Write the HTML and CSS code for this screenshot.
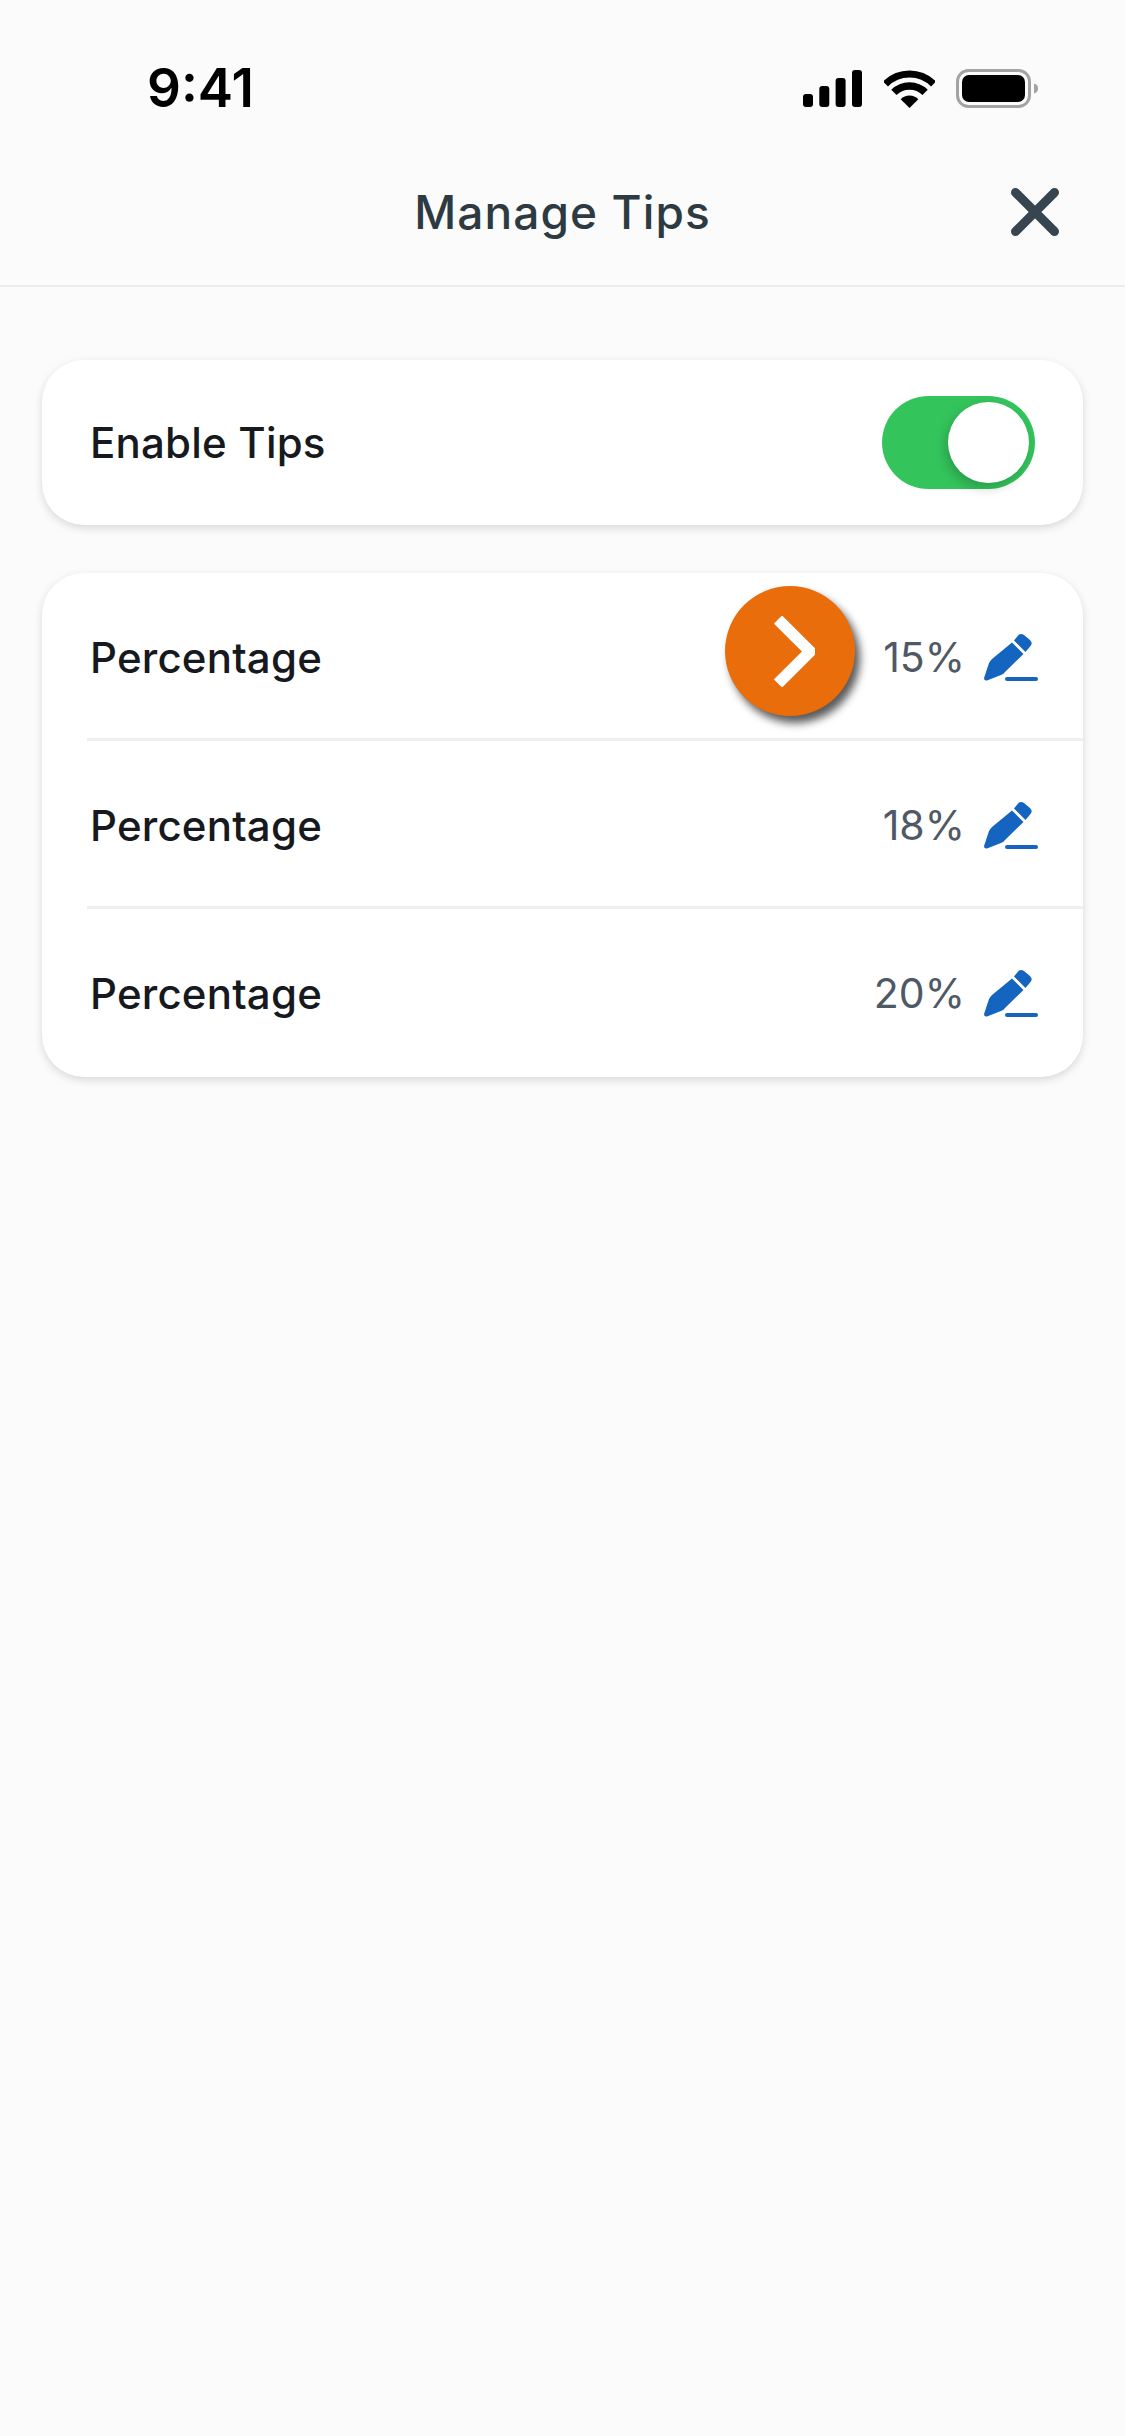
FILE: index.html
```html
<!DOCTYPE html>
<html lang="en">
<head>
<meta charset="utf-8">
<title>Manage Tips</title>
<link rel="stylesheet" href="styles.css">
</head>
<body>
<div class="screen">
  <div class="status-bar">
    <span class="time">9:41</span>
    <div class="status-icons">
      <svg class="signal" width="59" height="37" viewBox="0 0 59 37"><rect x="0" y="24" width="10" height="13" rx="3"/><rect x="16.3" y="16" width="10" height="21" rx="3"/><rect x="32.6" y="8" width="10" height="29" rx="3"/><rect x="49" y="0" width="10" height="37" rx="3"/></svg>
      <svg class="wifi" width="51" height="38" viewBox="0 0 51 38"><path d="M1.5 14A34 34 0 0 1 49.5 14" fill="none" stroke="#000" stroke-width="7"/><path d="M9.9 22.4A22 22 0 0 1 41.1 22.4" fill="none" stroke="#000" stroke-width="7.5"/><path d="M25.5 38L16.7 29.2A12.5 12.5 0 0 1 34.3 29.2Z"/></svg>
      <svg class="battery" width="83" height="39" viewBox="0 0 83 39"><rect x="1.5" y="1.5" width="72" height="36" rx="11" fill="none" stroke="#a3a3a3" stroke-width="3"/><rect x="6" y="6" width="63" height="27" rx="7"/><path d="M78 14.5C81 15 82 17 82 19.5S81 24 78 24.500Z" fill="#a3a3a3"/></svg>
    </div>
  </div>
  <header class="nav">
    <h1 class="nav-title">Manage Tips</h1>
    <svg class="nav-close" width="48" height="48" viewBox="0 0 48 48"><path d="M4.500 4.500L43.500 43.500M43.500 4.500L4.500 43.500" fill="none" stroke="#36454f" stroke-width="9" stroke-linecap="round"/></svg>
  </header>
  <main class="content">
    <section class="card toggle-card">
      <span class="label">Enable Tips</span>
      <div class="switch"><div class="knob"></div></div>
    </section>
    <section class="card list-card">
      <div class="row">
        <span class="label">Percentage</span>
        <div class="value-group">
          <span class="value">15%</span>
          <svg class="pencil" width="54" height="48" viewBox="0 0 54 48"><path d="M28 9.500L39.500 21L21 39Q20 41 17 42L3 47.500Q0 48 0 45L5 30Q6 28 8 26Z"/><path d="M30 7.500L34.500 2Q37 0 40 2L46 7Q49 10 46.500 13L41.500 19Z"/><rect x="21" y="44" width="33" height="4" rx="2"/></svg>
        </div>
      </div>
      <div class="row">
        <span class="label">Percentage</span>
        <div class="value-group">
          <span class="value">18%</span>
          <svg class="pencil" width="54" height="48" viewBox="0 0 54 48"><path d="M28 9.500L39.500 21L21 39Q20 41 17 42L3 47.500Q0 48 0 45L5 30Q6 28 8 26Z"/><path d="M30 7.500L34.500 2Q37 0 40 2L46 7Q49 10 46.500 13L41.500 19Z"/><rect x="21" y="44" width="33" height="4" rx="2"/></svg>
        </div>
      </div>
      <div class="row row-last">
        <span class="label">Percentage</span>
        <div class="value-group">
          <span class="value">20%</span>
          <svg class="pencil" width="54" height="48" viewBox="0 0 54 48"><path d="M28 9.500L39.500 21L21 39Q20 41 17 42L3 47.500Q0 48 0 45L5 30Q6 28 8 26Z"/><path d="M30 7.500L34.500 2Q37 0 40 2L46 7Q49 10 46.500 13L41.500 19Z"/><rect x="21" y="44" width="33" height="4" rx="2"/></svg>
        </div>
      </div>
      <div class="next-fab">
        <svg width="41" height="71" viewBox="0 0 41 71"><path d="M4 3.500L36 35.500L4 67.500" fill="none" stroke="#fff" stroke-width="11.500"/></svg>
      </div>
    </section>
  </main>
</div>
</body>
</html>
```
FILE: styles.css
```css
* { box-sizing: border-box; }
html, body { margin: 0; padding: 0; }
body {
  width: 1125px;
  height: 2436px;
  background: #fbfbfb;
  font-family: Inter, "Liberation Sans", sans-serif;
  overflow: hidden;
}
.screen { display: flex; flex-direction: column; height: 100%; }
.status-bar {
  height: 140px;
  display: flex;
  justify-content: space-between;
  align-items: flex-start;
  padding: 58px 86px 0 147px;
}
.time {
  font-size: 53px;
  line-height: 60px;
  font-weight: 600;
  color: #000;
}
.status-icons { display: flex; align-items: center; gap: 21px; padding-top: 11px; }
.status-icons svg { display: block; }
.signal { margin-right: 1px; }
.nav {
  position: relative;
  height: 147px;
  display: flex;
  align-items: center;
  justify-content: center;
  border-bottom: 2px solid #ededed;
}
.nav-title {
  margin: 0 0 1px;
  font-size: 46px;
  font-weight: 450;
  letter-spacing: 1.1px;
  color: #2d3a42;
}
.nav-close { position: absolute; right: 66px; top: 48px; }
.content {
  padding: 73px 42px 0;
  display: flex;
  flex-direction: column;
  gap: 48px;
}
.card {
  background: #fff;
  border-radius: 42px;
  box-shadow: 0 3px 8px rgba(0, 0, 0, 0.14);
}
.toggle-card {
  height: 165px;
  display: flex;
  align-items: center;
  justify-content: space-between;
  padding: 0 48px 0 48px;
}
.label {
  font-size: 42px;
  font-weight: 450;
  letter-spacing: 0.2px;
  color: #16191d;
}
.switch {
  position: relative;
  width: 153px;
  height: 93px;
  border-radius: 47px;
  background: #34c45c;
}
.knob {
  position: absolute;
  top: 6px;
  right: 6px;
  width: 81px;
  height: 81px;
  border-radius: 50%;
  background: #fff;
  box-shadow: -3px 5px 12px rgba(0, 0, 0, 0.2);
}
.list-card { position: relative; }
.row {
  height: 168px;
  margin-left: 45px;
  padding: 3px 45px 0 3px;
  display: flex;
  align-items: center;
  justify-content: space-between;
  border-bottom: 3px solid #efefef;
}
.row-last { border-bottom-color: transparent; }
.value-group { display: flex; align-items: center; gap: 19px; }
.value {
  font-size: 41px;
  font-weight: 400;
  color: #4f5966;
}
.pencil { display: block; fill: #1565c0; }
.next-fab {
  position: absolute;
  left: 683px;
  top: 13px;
  width: 130px;
  height: 130px;
  border-radius: 50%;
  background: #ea6d0c;
  box-shadow: 5px 7px 8px rgba(0, 0, 0, 0.65);
  display: flex;
  align-items: center;
  justify-content: center;
  padding-left: 8px;
}
.next-fab svg { display: block; }
```
